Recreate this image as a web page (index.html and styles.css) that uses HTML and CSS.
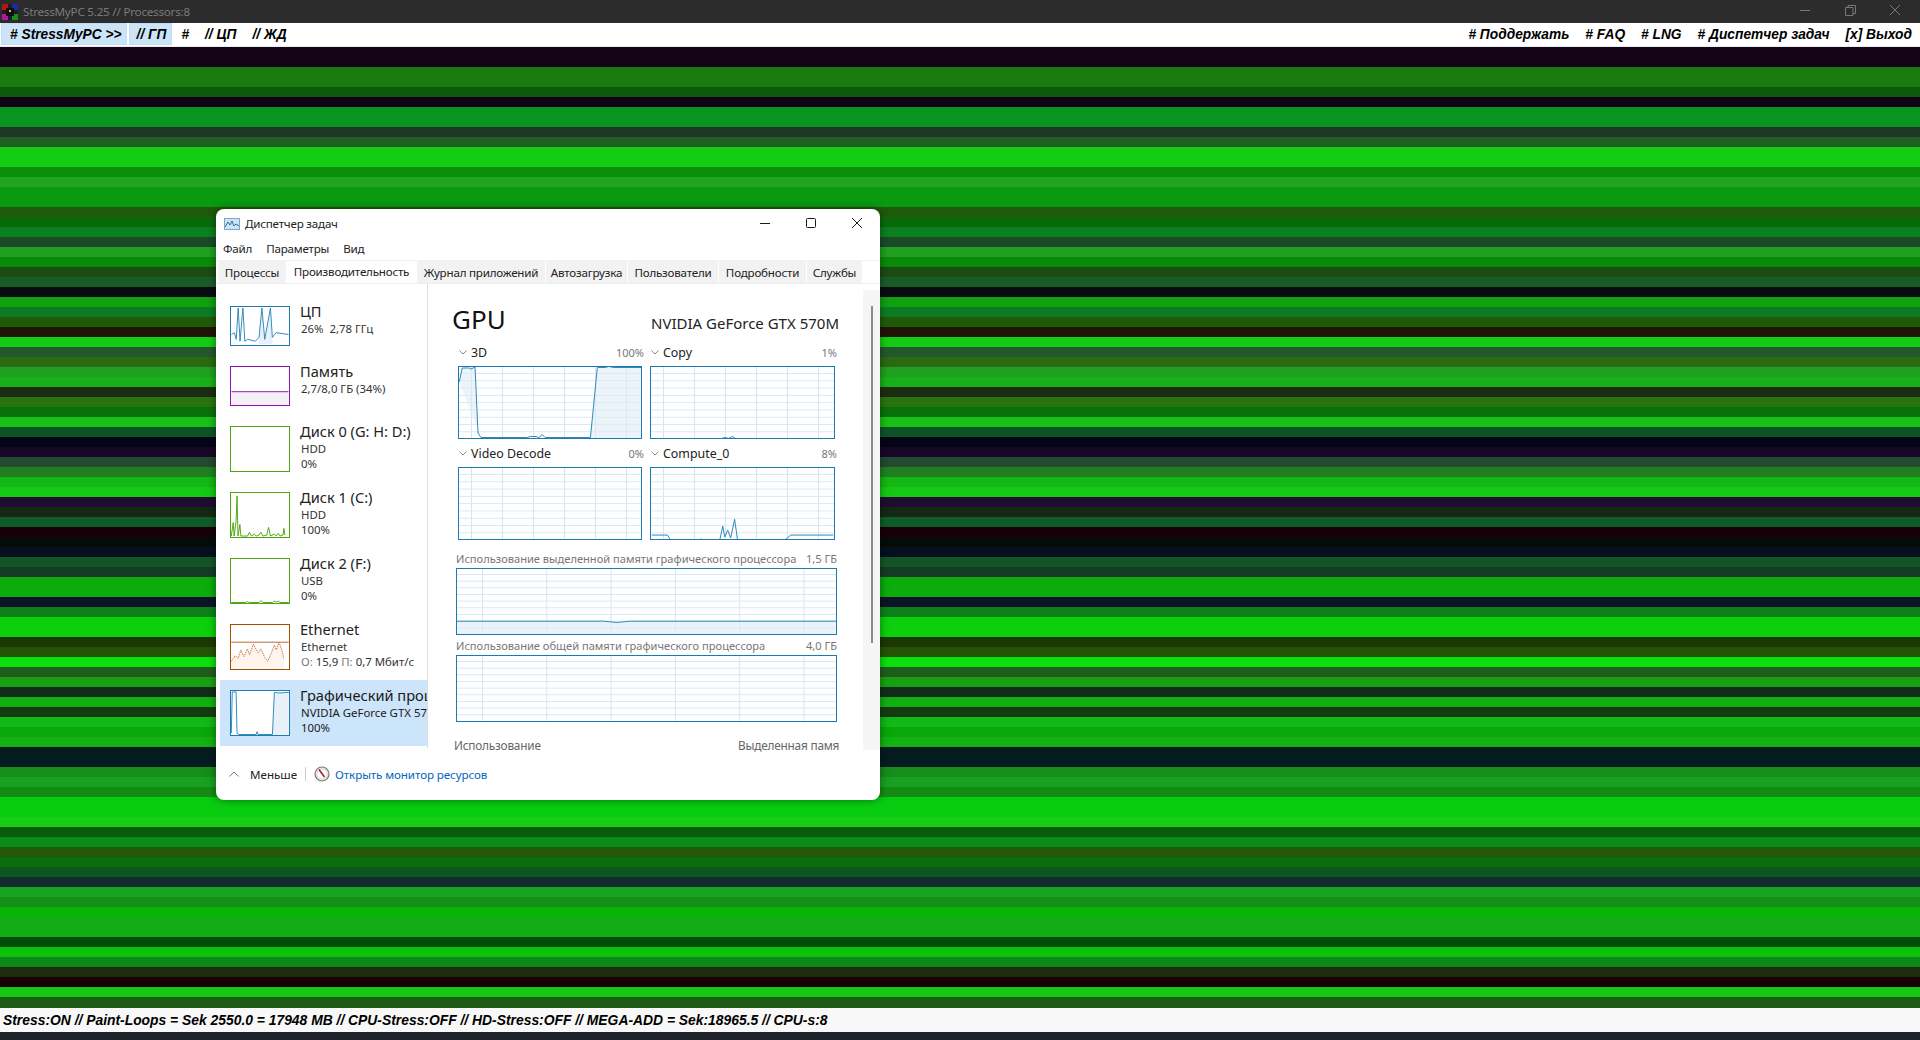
FILE: index.html
```html
<!DOCTYPE html>
<html lang="ru">
<head>
<meta charset="utf-8">
<title>StressMyPC</title>
<link rel="stylesheet" href="styles.css">
</head>
<body>
<div class="app">
  <header class="titlebar">
    <svg class="app-icon" viewBox="0 0 16 16"><rect width="16" height="16" fill="#1c1c2c"/><rect width="6" height="6" fill="#b01818"/><rect x="10" width="6" height="6" fill="#1c2c9c"/><rect y="10" width="6" height="6" fill="#b018a0"/><rect x="10" y="10" width="6" height="6" fill="#189018"/><rect x="4" y="4" width="8" height="8" fill="#101010"/><rect x="7" y="6" width="2" height="2" fill="#c8c820"/></svg>
    <span class="app-title">StressMyPC 5.25 // Processors:8</span>
    <div class="win-btns">
      <svg class="win-btn" viewBox="0 0 16 16"><path d="M2 8.500h10" /></svg>
      <svg class="win-btn" viewBox="0 0 16 16"><path d="M2.500 5.500h7.500v8h-7.500zM5 5.500v-2h7.500v8h-2.500" /></svg>
      <svg class="win-btn" viewBox="0 0 16 16"><path d="M2 3l10 10M12 3l-10 10" /></svg>
    </div>
  </header>
  <nav class="menubar">
    <a class="mi mi-first mi-on">#&nbsp;StressMyPC &gt;&gt;</a>
    <a class="mi mi-on mi-second">//&nbsp;ГП</a>
    <a class="mi">#</a>
    <a class="mi">//&nbsp;ЦП</a>
    <a class="mi">//&nbsp;ЖД</a>
    <span class="menu-spacer"></span>
    <a class="mi"># Поддержать</a>
    <a class="mi"># FAQ</a>
    <a class="mi"># LNG</a>
    <a class="mi"># Диспетчер задач</a>
    <a class="mi">[x] Выход</a>
  </nav>
  <main class="canvas">
    <section class="tm">
      <div class="tm-title">
        <svg class="tm-icon" viewBox="0 0 16 12"><rect x=".5" y=".5" width="15" height="11" fill="#cfe3f3" stroke="#7fa8c8"/><path d="M1 9l3-5 2 3 2-4 2 5 2-2 3 2" fill="none" stroke="#2a6ea8"/></svg>
        <span>Диспетчер задач</span>
        <div class="tm-ctrls">
          <svg class="tm-ctrl" viewBox="0 0 12 12"><path d="M1 6.500h10"/></svg>
          <svg class="tm-ctrl" viewBox="0 0 12 12"><rect x="1.500" y="1.500" width="9" height="9" rx="1"/></svg>
          <svg class="tm-ctrl" viewBox="0 0 12 12"><path d="M1 1l10 10M11 1l-10 10"/></svg>
        </div>
      </div>
      <div class="tm-menu"><span>Файл</span><span>Параметры</span><span>Вид</span></div>
      <div class="tabs">
        <span class="tab t1">Процессы</span>
        <span class="tab tab-on t2">Производительность</span>
        <span class="tab t3">Журнал приложений</span>
        <span class="tab t4">Автозагрузка</span>
        <span class="tab t5">Пользователи</span>
        <span class="tab t6">Подробности</span>
        <span class="tab t7">Службы</span>
      </div>
      <div class="tm-body">
        <aside class="side">
          <div class="item item-s">
            <svg class="thumb thumb-s th-blue" viewBox="0 0 60 40"><path class="fill-blue" d="M32 1L35 34 41 1 43 32V39H29V32Z"/><path class="ln-blue" d="M0 29l3-2 2 7 2-33 2 35 3-35 2 35 3-2 8 2 4-4 3-31 3 33 6-33 2 31 4-5 13 2"/></svg>
            <div class="item-text"><div class="it">ЦП</div><div class="is">26%&nbsp; 2,78 ГГц</div></div>
          </div>
          <div class="item item-s">
            <svg class="thumb thumb-s th-purple" viewBox="0 0 60 40"><rect y="26" width="60" height="14" fill="#f4eff6"/><path d="M0 26h60" stroke="#8b12ae" fill="none"/></svg>
            <div class="item-text"><div class="it">Память</div><div class="is">2,7/8,0 ГБ (34%)</div></div>
          </div>
          <div class="item">
            <svg class="thumb th-green" viewBox="0 0 60 46"></svg>
            <div class="item-text"><div class="it">Диск 0 (G: H: D:)</div><div class="is">HDD</div><div class="is">0%</div></div>
          </div>
          <div class="item">
            <svg class="thumb th-green" viewBox="0 0 60 46"><path class="ln-green" d="M0 45l2-14 1 14 2-16 1-26 1 42 2-12 1 12h7l2-4 2 4 3-2 2 2 3-1 2-3 2 4 4-1 2-8 2 9 4-2 2 2 2-3 2 3 3-1 1-7 1 7"/></svg>
            <div class="item-text"><div class="it">Диск 1 (C:)</div><div class="is">HDD</div><div class="is">100%</div></div>
          </div>
          <div class="item">
            <svg class="thumb th-green" viewBox="0 0 60 46"><path class="ln-green" d="M0 45.500h15l2-1 2 1h10l2-2 2 2h10l2-1.500 2 1 2-1 2 1.500h9"/></svg>
            <div class="item-text"><div class="it">Диск 2 (F:)</div><div class="is">USB</div><div class="is">0%</div></div>
          </div>
          <div class="item">
            <svg class="thumb th-orange" viewBox="0 0 60 46"><path class="fill-orange" d="M0 38l4-6 3 3 3-9 3 7 4-8 2 6 4-11 5 9 3-4 4 9 3 4 4-9 3-8 2 5 3-8 3 9 2 8V46H0Z"/><path class="ln-orange" d="M0 18h60"/><path class="ln-orange2" d="M0 38l4-6 3 3 3-9 3 7 4-8 2 6 4-11 5 9 3-4 4 9 3 4 4-9 3-8 2 5 3-8 3 9 2 8"/></svg>
            <div class="item-text"><div class="it">Ethernet</div><div class="is">Ethernet</div><div class="is"><span class="dim">О:</span> 15,9 <span class="dim">П:</span> 0,7 Мбит/с</div></div>
          </div>
          <div class="item item-on">
            <svg class="thumb th-blue th-white" viewBox="0 0 60 46"><path class="fill-blue" d="M45 1H60V46H43Z"/><path class="ln-blue" d="M0 44l1-43h4l1 43 2 1.500H26l1-3 1 3H43l2-44h2l1 .500h6l1-.500h5"/></svg>
            <div class="item-text"><div class="it">Графический процессор 0</div><div class="is">NVIDIA GeForce GTX 570M</div><div class="is">100%</div></div>
          </div>
        </aside>
        <div class="perf">
          <div class="perf-head"><span class="gpu">GPU</span><span class="device">NVIDIA GeForce GTX 570M</span></div>
          <div class="engines">
            <div class="engine">
              <div class="lab"><svg class="chev" viewBox="0 0 8 5"><path d="M.5.500L4 4 7.500.500"/></svg><span class="lab-name">3D</span><span class="lab-val">100%</span></div>
              <svg class="chart c-a" viewBox="0 0 184 72"><path class="fill-chart" d="M0 15L3 1H10L12 2 16 0 19 67 22 72ZM133 72L140 1H184V72Z"/><path class="ln-chart" d="M0 15l3-14 7 0 2 1 4-2 3 67 3 4.500h47l3-1h6l3 1 3-3 3 3h46l7-71 8 0 4-1 4 1h31"/></svg>
            </div>
            <div class="engine e2">
              <div class="lab"><svg class="chev" viewBox="0 0 8 5"><path d="M.5.500L4 4 7.500.500"/></svg><span class="lab-name">Copy</span><span class="lab-val">1%</span></div>
              <svg class="chart c-b" viewBox="0 0 184 72"><path class="ln-chart" d="M71 72.500l3-1 4 1 4-2 3 2"/></svg>
            </div>
            <div class="engine">
              <div class="lab"><svg class="chev" viewBox="0 0 8 5"><path d="M.5.500L4 4 7.500.500"/></svg><span class="lab-name">Video Decode</span><span class="lab-val">0%</span></div>
              <svg class="chart c-a" viewBox="0 0 184 72"></svg>
            </div>
            <div class="engine e2">
              <div class="lab"><svg class="chev" viewBox="0 0 8 5"><path d="M.5.500L4 4 7.500.500"/></svg><span class="lab-name">Compute_0</span><span class="lab-val">8%</span></div>
              <svg class="chart c-b" viewBox="0 0 184 72"><path class="ln-chart" d="M0 68h16l3 5h29l2-1 2 1h17l3-14 2 11 3-7 3 8 4-19 3 21h48l6-5h43"/></svg>
            </div>
          </div>
          <div class="mem-lab"><span>Использование выделенной памяти графического процессора</span><span>1,5 ГБ</span></div>
          <svg class="chart chart-mem" viewBox="0 0 380 66" preserveAspectRatio="none"><path class="fill-chart2" d="M0 53H147Q160 56 174 53H380V66H0Z"/><path class="ln-chart" d="M0 53H147Q160 55.500 174 53H380"/></svg>
          <div class="mem-lab"><span>Использование общей памяти графического процессора</span><span>4,0 ГБ</span></div>
          <svg class="chart chart-mem" viewBox="0 0 380 66"></svg>
          <div class="perf-cols"><span class="col1">Использование</span><span class="col2">Выделенная память графического процессора</span></div>
        </div>
        <div class="scroll"><div class="scroll-thumb"></div></div>
      </div>
      <footer class="tm-foot">
        <svg class="chev-up" viewBox="0 0 10 6"><path d="M.5 5.500L5 1l4.500 4.500"/></svg>
        <span class="less">Меньше</span>
        <span class="foot-sep"></span>
        <svg class="rm-icon" viewBox="0 0 16 16"><circle cx="8" cy="8" r="7" fill="#efefef" stroke="#777" stroke-width="1.200"/><circle cx="8" cy="8" r="5" fill="#fff" stroke="#bbb" stroke-width=".6"/><path d="M5 3.500L10.500 11" stroke="#b01c1c" stroke-width="1.600" fill="none"/></svg>
        <span class="link">Открыть монитор ресурсов</span>
      </footer>
    </section>
  </main>
  <div class="status">Stress:ON // Paint-Loops = Sek 2550.0 = 17948 MB // CPU-Stress:OFF // HD-Stress:OFF // MEGA-ADD = Sek:18965.5 // CPU-s:8</div>
  <div class="taskbar"></div>
</div>
</body>
</html>
```

FILE: styles.css
```css
* { box-sizing: border-box; }
html, body { margin: 0; height: 100%; overflow: hidden; }
body { font-family: "Noto Sans", "Liberation Sans", sans-serif; background: #202028; color: #1a1a1a; }
.app { display: flex; flex-direction: column; height: 1040px; }

.titlebar { height: 23px; background: #2c2c2c; display: flex; align-items: center; padding-left: 2px; flex: none; }
.app-icon { width: 16px; height: 16px; margin-right: 5px; }
.app-title { font-size: 11.600px; letter-spacing: -.2px; color: #7b7b7b; }
.win-btns { margin: 0 0 3px auto; display: flex; gap: 29px; padding-right: 16px; }
.win-btn { width: 16px; height: 16px; fill: none; stroke: #777; stroke-width: 1; }

.menubar { height: 24px; background: #fff; display: flex; align-items: stretch; flex: none; padding: 0 0 1px 1px; border-bottom: 1px solid #efeaf4;
  font: italic bold 13.750px "Liberation Sans", Arial, sans-serif; color: #000; }
.mi { display: flex; align-items: center; padding: 1px 8px 0; white-space: nowrap; }
.mi-on { background: #cce4f7; border: 1px solid #c2dcf2; }
.mi-first { padding: 1px 4px 0 8px; margin-right: 2px; }
.mi-second { padding: 1px 5px 0 7px; margin-right: 1px; }
.menu-spacer { flex: 1; }

.canvas { flex: none; height: 961px; position: relative; background: linear-gradient(180deg,
  #140418 0 20px, #1a7a10 20px 40px, #0a5a0a 40px 50px, #120414 50px 60px, #0a9420 60px 80px, #1c3824 80px 90px, #1f5f22 90px 100px,
  #14cc14 100px 120px, #0a8f0a 120px 130px, #22a422 130px 140px, #0a9a10 140px 160px, #1e5a0a 160px 170px, #0a6a0a 170px 180px,
  #0a8020 180px 190px, #1a4a28 190px 200px, #20a020 200px 210px, #0a8a0a 210px 220px, #1a4c14 220px 230px, #1a5c28 230px 240px,
  #080c10 240px 250px, #10a010 250px 260px, #0c7c24 260px 270px, #205a08 270px 280px, #201404 280px 290px, #14cc14 290px 300px,
  #24582c 300px 310px, #2a6a10 310px 320px, #20a020 320px 330px, #18b018 330px 340px, #1c2c10 340px 350px, #2a7410 350px 360px,
  #0a700a 360px 370px, #18c018 370px 380px, #0c5428 380px 390px, #050518 390px 400px, #180828 400px 410px, #244a30 410px 420px,
  #208020 420px 430px, #14b814 430px 440px, #14c814 440px 450px, #200c30 450px 460px, #142814 460px 470px, #105c28 470px 480px,
  #180008 480px 490px, #040c08 490px 500px, #041020 500px 510px, #145428 510px 520px, #143c24 520px 530px, #0cac0c 530px 550px,
  #0c1428 550px 560px, #0c8018 560px 570px, #0cd00c 570px 590px, #1c3804 590px 600px, #245404 600px 610px, #0ce00c 610px 620px,
  #205c1c 620px 630px, #18a014 630px 640px, #102c18 640px 650px, #10b010 650px 660px, #143c10 660px 670px, #10b818 670px 680px,
  #08a808 680px 690px, #14b014 690px 700px, #041c20 700px 720px, #188c1c 720px 730px, #18a020 730px 740px, #148c14 740px 750px,
  #08cc10 750px 770px, #18cc18 770px 780px, #0a5c0a 780px 790px, #0a8c18 790px 800px, #245808 800px 810px, #0a6c0a 810px 820px,
  #0a5820 820px 830px, #142c30 830px 840px, #18a420 840px 850px, #149018 850px 860px, #08b408 860px 870px, #14ac14 870px 890px,
  #044c0c 890px 900px, #0cc00c 900px 910px, #0c8a18 910px 920px, #1c2c0c 920px 930px, #180004 930px 940px, #14c814 940px 950px,
  #1c5c14 950px 961px); }

.status { height: 24px; background: #f8f8f8; flex: none; display: flex; align-items: center; padding-left: 3px;
  font: italic bold 13.870px "Liberation Sans", Arial, sans-serif; color: #000; white-space: nowrap; }
.taskbar { flex: 1; background: #20222c; }

/* Task Manager: a window on the desktop */
.tm { position: absolute; left: 216px; top: 162px; width: 664px; height: 591px; background: #fff; border-radius: 8px;
  box-shadow: 0 0 8px rgba(0,0,0,.45); display: flex; flex-direction: column; overflow: hidden; font-size: 11.600px; color: #222; }
.tm-title, .tm-menu, .tabs { letter-spacing: -.2px; }
.tm-title { height: 29px; display: flex; align-items: center; padding-left: 8px; flex: none; }
.tm-icon { width: 16px; height: 12px; margin-right: 5px; }
.tm-ctrls { margin-left: auto; display: flex; gap: 34px; padding: 0 17px 2px 0; }
.tm-ctrl { width: 12px; height: 12px; fill: none; stroke: #1a1a1a; stroke-width: 1; }
.tm-menu { height: 23px; display: flex; gap: 14px; align-items: center; padding: 0 0 2px 7px; border-bottom: 1px solid #f2f2f2; flex: none; }
.tabs { height: 23px; display: flex; padding-left: 2px; flex: none; align-items: flex-end; border-bottom: 1px solid #eee; }
.tab { height: 22px; display: flex; align-items: center; justify-content: center; background: #f2f2f2; margin-right: 1px; white-space: nowrap; flex: none; }
.tab-on { height: 23px; background: #fff; padding-bottom: 2px; border-top: 1px solid #eee; }
.t1 { width: 68px; } .t2 { width: 129px; } .t3 { width: 128px; } .t4 { width: 81px; } .t5 { width: 90px; } .t6 { width: 87px; } .t7 { width: 55px; }

.tm-body { flex: 1; display: flex; min-height: 0; }
.side { width: 208px; margin-left: 4px; padding-top: 12px; border-right: 1px solid #ddd; overflow: hidden; flex: none; margin-bottom: 10px; }
.item { height: 66px; display: flex; padding: 10px 0 0 10px; }
.item-s { height: 60px; }
.item-on { background: #cce5fa; }
.thumb { width: 60px; height: 46px; flex: none; border: 1px solid; background: #fff; }
.thumb-s { height: 40px; }
.th-blue { border-color: #1b7db5; }
.th-purple { border-color: #8b12ae; }
.th-green { border-color: #4da60c; }
.th-orange { border-color: #a74f01; }
.item-text { margin: -3px 0 0 10px; white-space: nowrap; }
.it { font-size: 14.600px; line-height: 18px; color: #222; margin: -1px 0 1px; }
.is { font-size: 11.400px; line-height: 15px; color: #333; padding-left: 1px; }
.dim { color: #777; }
.item-on .it, .item-on .is { color: #1a1a1a; }
.ln-blue { fill: none; stroke: #2e86b8; stroke-width: 1; }
.fill-blue { fill: #e8f1f8; }
.ln-green { fill: none; stroke: #4da60c; stroke-width: 1; }
.ln-orange { fill: none; stroke: #b8692c; stroke-width: 1; }
.ln-orange2 { fill: none; stroke: #c46e36; stroke-width: 1; stroke-dasharray: 1.500 1; }
.fill-orange { fill: #fdf4ed; }

.perf { width: 433px; flex: none; padding: 18px 0 0 0; overflow: hidden; margin-left: 2px; }
.perf-head { height: 36px; display: flex; align-items: center; justify-content: space-between; width: 387px; margin-left: 22px; }
.gpu { font-size: 26px; color: #111; line-height: 34px; padding-bottom: 2px; }
.device { font-size: 15px; color: #222; padding-top: 5px; }
.engines { display: grid; grid-template-columns: 186px 187px; column-gap: 6px; margin: 6px 0 4px 28px; }
.engine { display: flex; flex-direction: column; height: 101px; }
.e2 .chart { width: 185px; }
.lab { height: 22px; display: flex; align-items: center; padding-bottom: 5px; }
.chev { width: 8px; height: 5px; margin: 0 4px 0 1px; fill: none; stroke: #888; stroke-width: 1; }
.lab-name { font-size: 12.400px; color: #222; }
.lab-val { margin-left: auto; font-size: 11px; color: #777; }
.chart { display: block; width: 184px; height: 73px; border: 1px solid #1b7aae; background-color: #fff;
  background-image: linear-gradient(#d8e7f2 1px, transparent 1px), linear-gradient(90deg, #d6e6f1 1px, transparent 1px);
  background-size: 100% 7.300px, 31px 100%; }
.c-a { background-position: 0 6px, 12px 0; }
.c-b { background-position: 0 6px, 12px 0; }
.ln-chart { fill: none; stroke: #2e86b8; stroke-width: 1; }
.fill-chart { fill: #dcebf5; fill-opacity: .55; }
.fill-chart2 { fill: #dcebf5; fill-opacity: .6; }
.mem-lab { display: flex; justify-content: space-between; width: 381px; margin-left: 26px; height: 18px; padding-bottom: 2px; align-items: center; font-size: 11.100px; color: #777; }
.chart-mem { width: 381px; height: 67px; margin: 0 0 2px 26px; background-size: 100% 6.670px, 64.300px 100%; background-position: 0 5px, 25px 0; }
.perf-cols { display: flex; width: 385px; margin: 14px 0 0 24px; font-size: 11.800px; letter-spacing: -.2px; color: #666; white-space: nowrap; overflow: hidden; height: 18px; align-items: center; }
.col1 { width: 284px; flex: none; }

.scroll { width: 17px; flex: none; margin: 6px 0 8px auto; background: #f5f5f5; padding-top: 16px; display: flex; justify-content: center; }
.scroll-thumb { width: 2px; height: 337px; background: #8a8a8a; }

.tm-foot { height: 42px; flex: none; display: flex; align-items: center; padding: 0 0 10px 13px; }
.chev-up { width: 10px; height: 6px; fill: none; stroke: #777; stroke-width: 1; margin-right: 11px; }
.less { color: #222; }
.foot-sep { width: 1px; height: 14px; background: #ccc; margin: 0 8px; }
.rm-icon { width: 16px; height: 16px; margin-right: 5px; }
.link { color: #0067c0; letter-spacing: -.1px; }
```
